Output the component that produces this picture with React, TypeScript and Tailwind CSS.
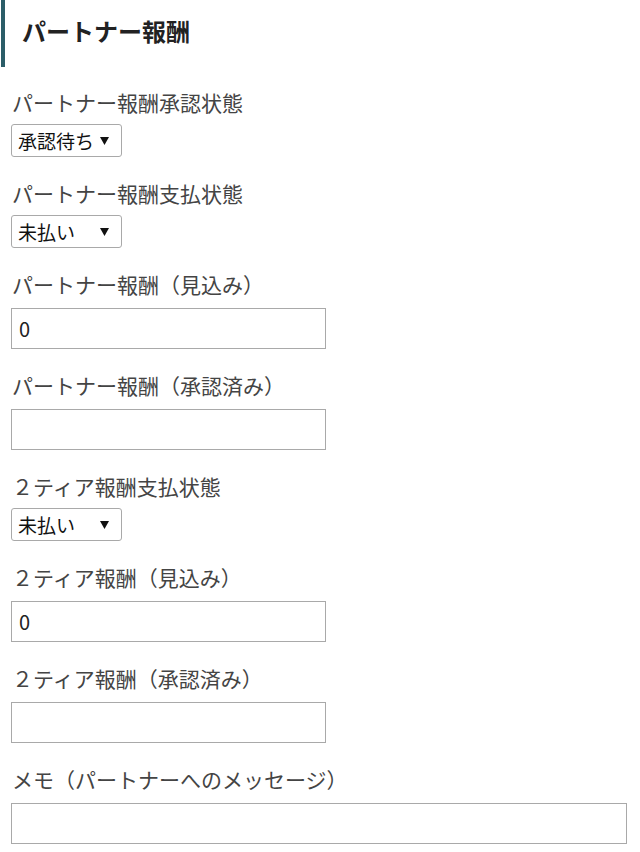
import React from "react";

const jp = { fontFamily: '"Noto Sans CJK JP", "Noto Sans", sans-serif' } as React.CSSProperties;

function Triangle() {
  return (
    <svg width="9" height="8" viewBox="0 0 9 8" className="block">
      <polygon points="0,0 9,0 4.5,8" fill="#111" />
    </svg>
  );
}

function SelectBox({ value }: { value: string }) {
  return (
    <div className="w-[111px] h-[33px] border border-[#a9a9a9] rounded-[3px] bg-white flex items-center justify-between pl-[6px] pr-[12px]">
      <span className="text-[19px] leading-none text-[#111]">{value}</span>
      <Triangle />
    </div>
  );
}

function TextBox({ value, wide }: { value?: string; wide?: boolean }) {
  return (
    <div
      className={
        (wide ? "w-[616px]" : "w-[315px]") +
        " h-[41px] border border-[#a9a9a9] bg-white flex items-center pl-[7px]"
      }
    >
      <span className="text-[20px] leading-none text-[#222]">{value ?? ""}</span>
    </div>
  );
}

function Field({
  label,
  kind,
  value,
  wide,
}: {
  label: string;
  kind: "select" | "input";
  value?: string;
  wide?: boolean;
}) {
  return (
    <div className="mb-[22px]">
      <div
        className={
          "text-[21px] leading-[28px] text-[#444] whitespace-nowrap pl-px" +
          (kind === "select" ? " mb-[8px]" : " mb-[10px]")
        }
      >
        {label}
      </div>
      {kind === "select" ? <SelectBox value={value ?? ""} /> : <TextBox value={value} wide={wide} />}
    </div>
  );
}

export default function App() {
  return (
    <div className="w-[640px] h-[852px] overflow-hidden bg-white" style={jp}>
      <div className="ml-px h-[67px] border-l-4 border-[#2b5d68] pl-[17px] pb-[6px] flex items-center">
        <h2 className="text-[24px] font-bold leading-none text-[#222]">パートナー報酬</h2>
      </div>
      <div className="pl-[11px] pt-[21px]">
        <Field label="パートナー報酬承認状態" kind="select" value="承認待ち" />
        <Field label="パートナー報酬支払状態" kind="select" value="未払い" />
        <Field label="パートナー報酬（見込み）" kind="input" value="0" />
        <Field label="パートナー報酬（承認済み）" kind="input" />
        <Field label="２ティア報酬支払状態" kind="select" value="未払い" />
        <Field label="２ティア報酬（見込み）" kind="input" value="0" />
        <Field label="２ティア報酬（承認済み）" kind="input" />
        <Field label="メモ（パートナーへのメッセージ）" kind="input" wide />
      </div>
    </div>
  );
}
